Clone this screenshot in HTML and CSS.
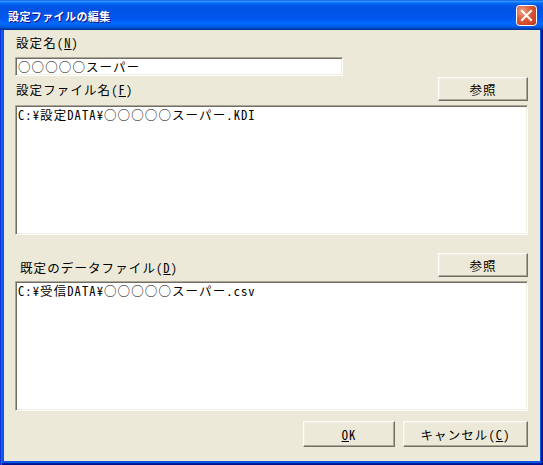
FILE: index.html
```html
<!DOCTYPE html>
<html lang="ja">
<head>
<meta charset="utf-8">
<title>設定ファイルの編集</title>
<link rel="stylesheet" href="styles.css">
</head>
<body>
<div class="window">
  <div class="titlebar">
    <span class="title">設定ファイルの編集</span>
    <span class="close" aria-label="閉じる">
      <svg width="21" height="21" viewBox="0 0 21 21">
        <defs>
          <radialGradient id="cg" cx="0.3" cy="0.3" r="0.9">
            <stop offset="0" stop-color="#F0A68C"/>
            <stop offset="0.45" stop-color="#DE5A36"/>
            <stop offset="1" stop-color="#C23A1A"/>
          </radialGradient>
        </defs>
        <rect x="0.5" y="0.5" width="20" height="20" rx="3" fill="url(#cg)" stroke="#FFFFFF"/>
        <path d="M6 6 L15 15 M15 6 L6 15" stroke="#FFFFFF" stroke-width="2" stroke-linecap="square"/>
      </svg>
    </span>
  </div>
  <div class="frame">
    <div class="label first">設定名(<u>N</u>)</div>
    <div class="field sunken">○○○○○スーパー</div>
    <div class="row">
      <div class="label">設定ファイル名(<u>F</u>)</div>
      <div class="btn browse">参照</div>
    </div>
    <div class="area sunken">C:¥設定DATA¥○○○○○スーパー.KDI</div>
    <div class="row row2">
      <div class="label indent">既定のデータファイル(<u>D</u>)</div>
      <div class="btn browse">参照</div>
    </div>
    <div class="area sunken">C:¥受信DATA¥○○○○○スーパー.csv</div>
    <div class="actions">
      <div class="btn ok"><u>O</u>K</div>
      <div class="btn cancel">キャンセル(<u>C</u>)</div>
    </div>
  </div>
</div>
</body>
</html>
```
FILE: styles.css
```css
html, body {
  margin: 0;
  padding: 0;
  width: 543px;
  height: 465px;
  overflow: hidden;
  background: #0A53E0;
}

.window {
  width: 543px;
  height: 465px;
  box-sizing: border-box;
  display: flex;
  flex-direction: column;
  background: #0B55E4;
  box-shadow: inset 1px 0 #0831D9, inset 2px 0 #166AEE, inset -1px -1px #00138C, inset -2px -2px #001EA0;
  font-family: "Noto Sans CJK JP", sans-serif;
  font-feature-settings: "hwid" 1;
  font-size: 12.5px;
  letter-spacing: 1.1px;
  color: #000;
}

.titlebar {
  flex: none;
  height: 30px;
  box-sizing: border-box;
  padding: 0 6px 0 8px;
  display: flex;
  align-items: center;
  justify-content: space-between;
  background: linear-gradient(to bottom, #0058EE 0%, #3A93FF 4%, #288EFF 6%, #127DFF 8%, #036FFC 10%, #0262EE 14%, #0057E5 20%, #0054E3 24%, #0055EB 56%, #005BF5 66%, #026AFE 76%, #0062EF 86%, #0052D6 92%, #0040AB 96%, #003092 100%);
}

.title {
  color: #FFFFFF;
  font-weight: bold;
  font-size: 11px;
  letter-spacing: 0.4px;
  text-shadow: 1px 1px #0F1089;
  line-height: 14px;
  padding-top: 2px;
}

.close {
  display: block;
  width: 21px;
  height: 21px;
  margin-top: 1px;
}

.close svg {
  display: block;
}

.frame {
  flex: 1;
  margin: 0 3px 4px 4px;
  background: #ECE9D8;
  padding: 6px 12px 0 11px;
  display: flex;
  flex-direction: column;
}

.label {
  height: 14px;
  line-height: 14px;
  padding-left: 1px;
  white-space: nowrap;
}

.label u, .btn u {
  text-decoration-thickness: 1px;
  text-underline-offset: 1px;
}

.indent {
  padding-left: 5px;
}

.sunken {
  box-sizing: border-box;
  background: #FFFFFF;
  border: 1px solid;
  border-color: #ACA899 #FFFFFF #FFFFFF #ACA899;
  box-shadow: inset 1px 1px #716F64, inset -1px -1px #F1EFE2;
  white-space: nowrap;
}

.field {
  margin-top: 7px;
  width: 328px;
  height: 19px;
  padding: 1px 2px;
  line-height: 15px;
}

.area {
  margin-top: 4px;
  height: 130px;
  padding: 1px 2px;
  line-height: 15px;
}

.row {
  margin-top: 1px;
  height: 24px;
  display: flex;
  justify-content: space-between;
  align-items: flex-end;
}

.row .label {
  margin-bottom: 4px;
}

.row2 {
  margin-top: 18px;
}

.row2 .label {
  margin-bottom: 2px;
}

.btn {
  box-sizing: border-box;
  background: #ECE9D8;
  border: 1px solid;
  border-color: #FFFFFF #716F64 #716F64 #FFFFFF;
  box-shadow: inset -1px -1px #ACA899, inset 1px 1px #F1EFE2;
  display: flex;
  align-items: center;
  justify-content: center;
  white-space: nowrap;
}

.browse {
  width: 90px;
  height: 24px;
  align-self: flex-start;
}

.actions {
  margin-top: 10px;
  display: flex;
  justify-content: flex-end;
  gap: 8px;
}

.ok {
  width: 92px;
  height: 26px;
}

.cancel {
  width: 125px;
  height: 26px;
}
```
